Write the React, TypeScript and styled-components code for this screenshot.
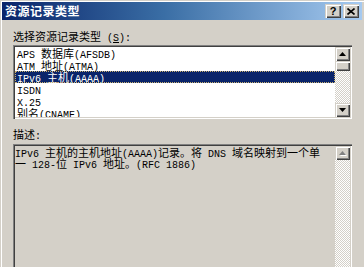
import React from "react";
import styled, { createGlobalStyle, css } from "styled-components";

const GlobalStyle = createGlobalStyle`
  html, body { margin: 0; padding: 0; background: #d4d0c8; }
  * { box-sizing: border-box; }
`;

const Window = styled.div`
  width: 364px;
  height: 267px;
  overflow: hidden;
  background: #d4d0c8;
  padding: 1px 0 0 1px;
  font-family: "Noto Sans CJK SC", sans-serif;
  font-size: 11px;
  color: #000;
`;

const Frame = styled.div`
  height: 100%;
  border-top: 1px solid #fff;
  border-left: 1px solid #fff;
  display: flex;
  flex-direction: column;
`;

const TitleBar = styled.div`
  height: 18px;
  margin-right: 2px;
  display: flex;
  align-items: center;
  padding: 0 3px 0 3px;
  background: linear-gradient(to right, #0a246a 0%, #3a6ea5 45%, #a6caf0 100%);
`;

const Title = styled.div`
  flex: 1;
  color: #fff;
  font-weight: bold;
  font-size: 12px;
  letter-spacing: 0.5px;
  line-height: 18px;
`;

const CaptionButtons = styled.div`
  display: flex;
  gap: 2px;
`;

const raised = css`
  background: #d4d0c8;
  box-shadow: inset 1px 1px #d4d0c8, inset 2px 2px #fff, inset -1px -1px #404040,
    inset -2px -2px #808080;
`;

const sunken = css`
  box-shadow: inset 1px 1px #808080, inset 2px 2px #404040, inset -1px -1px #fff,
    inset -2px -2px #d4d0c8;
  padding: 2px;
`;

const CaptionButton = styled.div`
  ${raised};
  width: 16px;
  height: 14px;
  display: flex;
  align-items: center;
  justify-content: center;
  font-family: "Liberation Sans", sans-serif;
  font-weight: bold;
  font-size: 11px;
  line-height: 14px;
`;

const Body = styled.div`
  display: flex;
  flex-direction: column;
  padding: 10px 0 0 11px;
`;

const FieldLabel = styled.div<{ $gap?: number }>`
  height: 13px;
  line-height: 13px;
  margin-top: ${(p) => p.$gap ?? 0}px;
  white-space: nowrap;
`;

const Latin = styled.span`
  font-family: "Liberation Mono", monospace;
  font-size: 10px;
  white-space: pre;
`;

const Mnemonic = styled.span`
  text-decoration: underline;
`;

const Field = styled.div<{ $h: number; $gap: number }>`
  ${sunken};
  width: 339px;
  height: ${(p) => p.$h}px;
  margin-top: ${(p) => p.$gap}px;
  flex-shrink: 0;
  display: flex;
`;

const ListArea = styled.div`
  flex: 1;
  background: #fff;
  overflow: hidden;
`;

const Row = styled.div<{ $selected?: boolean }>`
  height: 12px;
  line-height: 12px;
  padding-left: 2px;
  white-space: nowrap;
  ${(p) =>
    p.$selected &&
    css`
      background: #0a246a;
      color: #fff;
      outline: 1px dotted #c8b070;
      outline-offset: -1px;
    `}
`;

const DescArea = styled.div`
  flex: 1;
  background: #d4d0c8;
  padding: 1px 0 0 0;
  overflow: hidden;
`;

const DescLine = styled.div`
  height: 11px;
  line-height: 11px;
  white-space: nowrap;
`;

const ScrollBar = styled.div`
  width: 15px;
  display: flex;
  flex-direction: column;
`;

const ScrollButton = styled.div`
  ${raised};
  height: 14px;
  flex-shrink: 0;
  display: flex;
  align-items: center;
  justify-content: center;
`;

const Track = styled.div`
  flex: 1;
  background-color: #fff;
  background-image: conic-gradient(#d4d0c8 25%, #fff 0 50%, #d4d0c8 0 75%, #fff 0);
  background-size: 2px 2px;
`;

const Thumb = styled.div`
  ${raised};
  height: 10px;
  flex-shrink: 0;
`;

const T = (s: string) =>
  s
    .split(/([\x00-\xff]+)/)
    .filter(Boolean)
    .map((p, i) =>
      /^[\x00-\xff]+$/.test(p) ? <Latin key={i}>{p}</Latin> : <span key={i}>{p}</span>
    );

const Arrow = ({ dir, disabled }: { dir: "up" | "down"; disabled?: boolean }) => (
  <svg width="7" height="5" viewBox="0 0 7 5" style={{ overflow: "visible" }}>
    {disabled && (
      <polygon
        points={dir === "up" ? "4.5,1 8,5 1,5" : "1,1 8,1 4.5,5"}
        fill="#fff"
      />
    )}
    <polygon
      points={dir === "up" ? "3.5,0 7,4 0,4" : "0,0 7,0 3.5,4"}
      fill={disabled ? "#808080" : "#000"}
    />
  </svg>
);

const items = [
  "APS 数据库(AFSDB)",
  "ATM 地址(ATMA)",
  "IPv6 主机(AAAA)",
  "ISDN",
  "X.25",
  "别名(CNAME)",
];

export default function App() {
  return (
    <>
      <GlobalStyle />
      <Window>
        <Frame>
          <TitleBar>
            <Title>资源记录类型</Title>
            <CaptionButtons>
              <CaptionButton>?</CaptionButton>
              <CaptionButton>
                <svg width="8" height="7" viewBox="0 0 8 7">
                  <path d="M0.5 0.5 L7.5 6.5 M7.5 0.5 L0.5 6.5" stroke="#000" strokeWidth="1.6" />
                </svg>
              </CaptionButton>
            </CaptionButtons>
          </TitleBar>
          <Body>
            <FieldLabel>
              {T("选择资源记录类型 (")}
              <Latin>
                <Mnemonic>S</Mnemonic>
              </Latin>
              {T("):")}
            </FieldLabel>
            <Field $h={74} $gap={2}>
              <ListArea>
                {items.map((it, i) => (
                  <Row key={it} $selected={i === 2}>
                    {T(it)}
                  </Row>
                ))}
              </ListArea>
              <ScrollBar>
                <ScrollButton>
                  <Arrow dir="up" />
                </ScrollButton>
                <Thumb />
                <Track />
                <ScrollButton>
                  <Arrow dir="down" />
                </ScrollButton>
              </ScrollBar>
            </Field>
            <FieldLabel $gap={9}>{T("描述:")}</FieldLabel>
            <Field $h={140} $gap={3}>
              <DescArea>
                <DescLine>{T("IPv6 主机的主机地址(AAAA)记录。将 DNS 域名映射到一个单")}</DescLine>
                <DescLine>{T("一 128-位 IPv6 地址。(RFC 1886)")}</DescLine>
              </DescArea>
              <ScrollBar>
                <ScrollButton>
                  <Arrow dir="up" disabled />
                </ScrollButton>
                <Track />
              </ScrollBar>
            </Field>
          </Body>
        </Frame>
      </Window>
    </>
  );
}
